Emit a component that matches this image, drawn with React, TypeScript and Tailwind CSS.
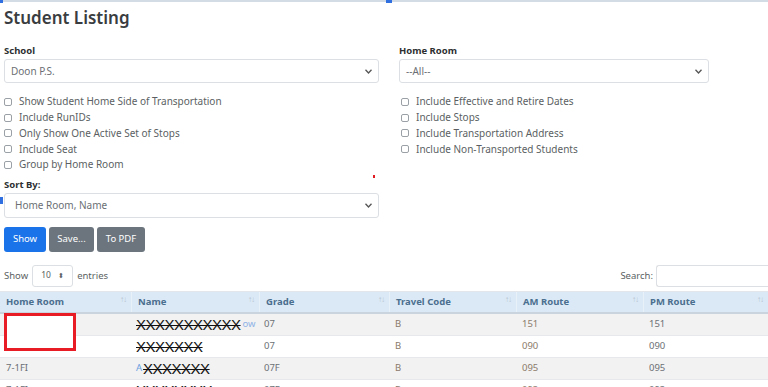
import React from 'react';

const leftChecks = [
  'Show Student Home Side of Transportation',
  'Include RunIDs',
  'Only Show One Active Set of Stops',
  'Include Seat',
  'Group by Home Room',
];

const rightChecks = [
  'Include Effective and Retire Dates',
  'Include Stops',
  'Include Transportation Address',
  'Include Non-Transported Students',
];

const columns = [
  { label: 'Home Room', w: 'w-[131px]' },
  { label: 'Name', w: 'w-[128px]' },
  { label: 'Grade', w: 'w-[130px]' },
  { label: 'Travel Code', w: 'w-[127px]' },
  { label: 'AM Route', w: 'w-[127px]' },
  { label: 'PM Route', w: 'flex-1' },
];

const rows = [
  { room: '', pre: '', name: 'XXXXXXXXXXX', post: 'ow', grade: '07', code: 'B', am: '151', pm: '151', shade: true },
  { room: '', pre: '', name: 'XXXXXXX', post: '', grade: '07', code: 'B', am: '090', pm: '090', shade: false },
  { room: '7-1FI', pre: 'A', name: 'XXXXXXX', post: '', grade: '07F', code: 'B', am: '095', pm: '095', shade: true },
  { room: '7-1FI', pre: '', name: 'XXXXXXXX', post: '', grade: '07F', code: 'B', am: '093', pm: '093', shade: false },
];

function Select({ value, className }: { value: string; className: string }) {
  return (
    <div
      className={`flex items-center justify-between border border-[#dcdfe3] rounded-[3px] bg-white pl-[6px] pr-[6px] text-[10px] text-[#6b6f74] ${className}`}
    >
      <span>{value}</span>
      <svg width="7" height="5" viewBox="0 0 7 5">
        <path d="M0.5 0.8 L3.5 4 L6.5 0.8" fill="none" stroke="#555" strokeWidth="1.3" />
      </svg>
    </div>
  );
}

function Check({ label }: { label: string }) {
  return (
    <div className="flex items-center h-[15.75px] gap-[7px]">
      <span className="w-[8px] h-[8px] border border-[#9aa0a6] rounded-[2px] bg-white" />
      <span className="text-[10px] text-[#5b5f63]">{label}</span>
    </div>
  );
}

function SortIcon() {
  return <span className="text-[8px] leading-none text-[#b6c3cf] tracking-[-1px] mt-[-6px]">↑↓</span>;
}

export default function App() {
  return (
    <div className="w-[768px] h-[387px] overflow-hidden bg-white font-['Noto_Sans',sans-serif] relative">
      {/* top strip */}
      <div className="h-[2px] bg-[#d3dbe5] relative">
        <span className="absolute left-[0px] top-[-1px] w-[3px] h-[4px] bg-[#2f6fe0]" />
        <span className="absolute left-[386px] top-[-1px] w-[6px] h-[4px] bg-[#2f6fe0]" />
      </div>

      <h1 className="pl-[4px] pt-[4px] text-[17px] font-semibold text-[#3a3d40] leading-[24px]">Student Listing</h1>

      <div className="flex pl-[4px] mt-[14px]">
        <div className="w-[375px]">
          <div className="text-[9.5px] font-bold text-[#2d2f31] leading-[13px]">School</div>
          <Select value="Doon P.S." className="h-[24px] mt-[2px]" />
          <div className="mt-[11px]">
            {leftChecks.map((c) => (
              <Check key={c} label={c} />
            ))}
          </div>
        </div>
        <div className="w-[310px] ml-[20px]">
          <div className="text-[9.5px] font-bold text-[#2d2f31] leading-[13px]">Home Room</div>
          <Select value="--All--" className="h-[24px] mt-[2px]" />
          <div className="mt-[11px] pl-[2px]">
            {rightChecks.map((c) => (
              <Check key={c} label={c} />
            ))}
          </div>
        </div>
      </div>

      <span className="absolute left-[373px] top-[175px] w-[2px] h-[3px] bg-[#e01b22]" />
      <span className="absolute left-[0px] top-[197px] w-[3px] h-[7px] bg-[#2f6fe0]" />

      <div className="pl-[4px] mt-[5px]">
        <div className="text-[9.5px] font-bold text-[#2d2f31] leading-[13px]">Sort By:</div>
        <Select value="Home Room, Name" className="w-[375px] h-[25px] mt-[2px] pl-[10px]" />
      </div>

      <div className="flex gap-[3px] pl-[4px] mt-[9px]">
        <button className="h-[25px] w-[42px] rounded-[3px] bg-[#1a73e8] text-white text-[9.5px]">Show</button>
        <button className="h-[25px] w-[45px] rounded-[3px] bg-[#6c757d] text-white text-[9.5px]">Save...</button>
        <button className="h-[25px] w-[48px] rounded-[3px] bg-[#6c757d] text-white text-[9.5px]">To PDF</button>
      </div>

      <div className="flex items-center justify-between pl-[4px] mt-[13px] h-[22px]">
        <div className="flex items-center text-[9.5px] text-[#5b5f63]">
          <span>Show</span>
          <span className="ml-[4px] w-[41px] h-[22px] border border-[#dcdfe3] rounded-[3px] flex items-center justify-center gap-[7px] text-[8.5px]">
            10 <span className="text-[7px] leading-none">⬍</span>
          </span>
          <span className="ml-[4px]">entries</span>
        </div>
        <div className="flex items-center text-[9.5px] text-[#5b5f63]">
          <span>Search:</span>
          <span className="ml-[3px] w-[112px] h-[22px] border border-[#dcdfe3] rounded-l-[3px] border-r-0" />
        </div>
      </div>

      <div className="mt-[4px] border-t border-[#e3e6ea]">
        <div className="flex h-[22px] bg-[#dbe9f6] border-b-2 border-[#c9d4de]">
          {columns.map((c, i) => (
            <div
              key={c.label}
              className={`${c.w} flex items-center justify-between pl-[6px] pr-[5px] text-[9.5px] font-bold text-[#4b6f8f] ${i > 0 ? 'border-l border-[#e8f0f8]' : ''}`}
            >
              <span>{c.label}</span>
              <SortIcon />
            </div>
          ))}
        </div>
        {rows.map((r, idx) => (
          <div
            key={idx}
            className={`flex h-[22px] items-center text-[9.5px] text-[#6b6f74] border-b border-[#e6e8eb] ${r.shade ? 'bg-[#f2f2f2]' : 'bg-white'}`}
          >
            <div className="w-[131px] pl-[6px]">{r.room}</div>
            <div className="w-[128px] pl-[5px] flex items-center whitespace-nowrap overflow-hidden">
              {r.pre && <span className="text-[#6a9ee0] mr-[1px]">{r.pre}</span>}
              <span className="text-[15px] leading-none text-[#111] line-through tracking-[-0.5px] font-['Liberation_Sans',sans-serif]">
                {r.name}
              </span>
              {r.post && <span className="text-[#8fb3e6] ml-[2px]">{r.post}</span>}
            </div>
            <div className="w-[130px] pl-[5px]">{r.grade}</div>
            <div className="w-[127px] pl-[6px] text-[#8a7a6a]">{r.code}</div>
            <div className="w-[127px] pl-[6px] text-[#8a7a6a]">{r.am}</div>
            <div className="flex-1 pl-[6px]">{r.pm}</div>
          </div>
        ))}
      </div>

      {/* redaction box */}
      <span className="absolute left-[4px] top-[313px] w-[72px] h-[38px] border-[3px] border-[#e81c24] bg-white" />
    </div>
  );
}
